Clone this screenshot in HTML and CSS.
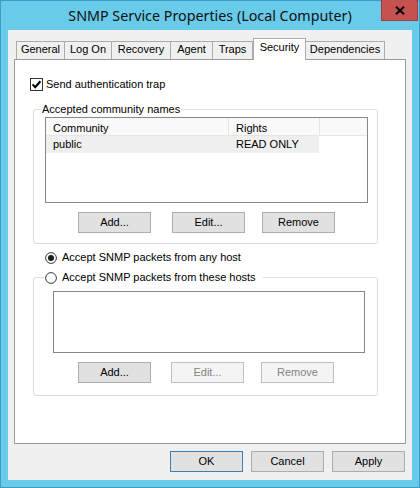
FILE: index.html
```html
<!DOCTYPE html>
<html>
<head>
<meta charset="utf-8">
<link rel="stylesheet" href="styles.css">
</head>
<body>
<div class="window">
  <div class="titlebar">
    <div class="title-spacer"></div>
    <div class="title">SNMP Service Properties (Local Computer)</div>
    <div class="title-actions">
      <div class="close">
        <svg width="10" height="9" viewBox="0 0 10 9"><path d="M1 0.8 L9 8.2 M9 0.8 L1 8.2" stroke="#000" stroke-width="2.2" fill="none"/></svg>
      </div>
    </div>
  </div>
  <div class="client">
    <div class="tabs">
      <div class="tab w-general">General</div>
      <div class="tab w-logon">Log On</div>
      <div class="tab w-recovery">Recovery</div>
      <div class="tab w-agent">Agent</div>
      <div class="tab w-traps">Traps</div>
      <div class="tab selected w-security">Security</div>
      <div class="tab w-deps">Dependencies</div>
    </div>
    <div class="panel">
      <div class="check-row">
        <svg class="checkbox" width="13" height="13" viewBox="0 0 13 13"><rect x="0.5" y="0.5" width="12" height="12" fill="#fff" stroke="#333"/><path d="M2.6 6.4 L5.2 9.2 L10.4 3.2" stroke="#000" stroke-width="2.1" fill="none"/></svg>
        <span class="label">Send authentication trap</span>
      </div>
      <fieldset class="group g1">
        <legend class="legend-text">Accepted community names</legend>
        <div class="list list1">
          <div class="lv-head">
            <div class="col c1">Community</div>
            <div class="col c2">Rights</div>
          </div>
          <div class="lv-row sel">
            <div class="col c1">public</div>
            <div class="col c2">READ ONLY</div>
          </div>
        </div>
        <div class="btn-row row1">
          <div class="btn b-add1">Add...</div>
          <div class="btn b-edit1">Edit...</div>
          <div class="btn b-rem1">Remove</div>
        </div>
      </fieldset>
      <div class="radio-row">
        <svg class="radio" width="12" height="12" viewBox="0 0 12 12"><circle cx="6" cy="6" r="5.4" fill="#fff" stroke="#3a3a3a"/><circle cx="6" cy="6" r="3" fill="#1c1c1c"/></svg>
        <span class="label">Accept SNMP packets from any host</span>
      </div>
      <fieldset class="group g2">
        <legend class="legend-radio">
          <svg class="radio" width="12" height="12" viewBox="0 0 12 12"><circle cx="6" cy="6" r="5.4" fill="#fff" stroke="#3a3a3a"/></svg>
          <span class="label">Accept SNMP packets from these hosts</span>
        </legend>
        <div class="list list2"></div>
        <div class="btn-row row2">
          <div class="btn b-add2">Add...</div>
          <div class="btn disabled b-edit2">Edit...</div>
          <div class="btn disabled b-rem2">Remove</div>
        </div>
      </fieldset>
    </div>
    <div class="footer">
      <div class="btn default">OK</div>
      <div class="btn">Cancel</div>
      <div class="btn">Apply</div>
    </div>
  </div>
</div>
</body>
</html>
```

FILE: styles.css
```css
* { box-sizing: border-box; }
html, body { margin: 0; padding: 0; }
body {
  width: 420px;
  height: 488px;
  overflow: hidden;
  font-family: "Liberation Sans", Arial, sans-serif;
  font-size: 11px;
  color: #000;
}
.window {
  width: 420px;
  height: 488px;
  background: #69cbea;
  border: 1px solid #3f9cc8;
  padding: 0 7px 7px 7px;
  display: flex;
  flex-direction: column;
}
.titlebar {
  height: 29px;
  margin: 0 -7px;
  display: grid;
  grid-template-columns: 1fr auto 1fr;
  align-items: start;
}
.title {
  font-family: "Noto Sans", "Open Sans", sans-serif;
  font-size: 14.3px;
  line-height: 20px;
  padding-top: 5px;
  color: #111;
  white-space: nowrap;
}
.title-actions {
  display: flex;
  justify-content: flex-end;
  padding-right: 1px;
}
.close {
  width: 37px;
  height: 21px;
  margin-top: -1px;
  background: #c75050;
  border: 1px solid #a33c3c;
  border-top: none;
  display: flex;
  align-items: center;
  justify-content: center;
}
.close svg { display: block; margin-top: 1px; }

.client {
  flex: 1;
  background: #f0f0f0;
  padding-top: 8px;
  display: flex;
  flex-direction: column;
}
.tabs {
  height: 21px;
  padding-left: 8px;
  display: flex;
  align-items: flex-end;
}
.tab {
  height: 18px;
  border: 1px solid #acacac;
  border-bottom: none;
  background: #f0f0f0;
  text-align: center;
  line-height: 13px;
  padding-top: 1px;
  white-space: nowrap;
}
.tab + .tab { border-left: none; }
.tab.selected {
  height: 22px;
  margin-bottom: -1px;
  background: #fff;
  padding-top: 2px;
  position: relative;
  z-index: 1;
  border-left: 1px solid #acacac;
}
.tab.selected + .tab { border-left: none; }
.w-general { width: 49px; }
.w-logon { width: 47px; }
.w-recovery { width: 59px; }
.w-agent { width: 42px; }
.w-traps { width: 40px; }
.w-security { width: 53px; }
.w-deps { width: 79px; }

.panel {
  height: 385px;
  margin: 0 6px;
  background: #fff;
  border: 1px solid #9a9a9a;
  display: flex;
  flex-direction: column;
}
.check-row, .radio-row {
  display: flex;
  align-items: center;
  height: 13px;
  line-height: 13px;
  white-space: nowrap;
}
.check-row { margin: 18px 0 0 15px; gap: 3px; }
.checkbox, .radio { display: block; flex: none; }
.radio-row { margin: 7px 0 0 30px; gap: 5px; }

.group {
  margin: 12px 0 0 18px;
  width: 345px;
  padding: 0;
  border: 1px solid #dcdcdc;
  border-radius: 3px;
  min-inline-size: 0;
}
.g1 { height: 141px; }
.g2 { height: 125px; margin-top: 7px; }
legend {
  padding: 0 1px;
  line-height: 13px;
  height: 13px;
  white-space: nowrap;
}
.legend-text { margin-left: 7px; }
.legend-radio {
  margin-left: 10px;
  padding: 0 7px 0 1px;
  display: flex;
  align-items: center;
  gap: 5px;
}

.list {
  border: 1px solid #828790;
  background: #fff;
}
.list1 { margin: 1px 0 0 11px; width: 323px; height: 86px; }
.list2 { margin: 7px 0 0 19px; width: 312px; height: 62px; }

.lv-head {
  display: flex;
  height: 18px;
  background: #f9f9f9;
  border-bottom: 1px solid #e5e5e5;
}
.lv-row { display: flex; height: 17px; width: 273px; }
.lv-row.sel { background: #efefef; }
.col {
  line-height: 13px;
  padding-left: 7px;
  white-space: nowrap;
}
.lv-head .col { padding-top: 4px; border-right: 1px solid #e5e5e5; height: 17px; }
.lv-row .col { padding-top: 2px; }
.c1 { width: 183px; }
.c2 { width: 91px; }
.lv-row .c2 { width: 90px; }

.btn-row { display: flex; }
.row1 { margin-top: 9px; padding-left: 44px; }
.row2 { margin-top: 9px; padding-left: 44px; }
.btn {
  width: 73px;
  height: 21px;
  border: 1px solid #adadad;
  background: #e1e1e1;
  text-align: center;
  line-height: 19px;
  white-space: nowrap;
}
.btn.disabled {
  background: #f4f4f4;
  border-color: #bfbfbf;
  color: #838383;
}
.btn.default { border-color: #3c7fb1; }
.b-edit1 { margin-left: 21px; }
.b-rem1 { margin-left: 17px; }
.b-edit2 { margin-left: 20px; }
.b-rem2 { margin-left: 17px; }

.footer {
  display: flex;
  justify-content: flex-end;
  gap: 8px;
  padding: 7px 7px 0 0;
}
```
